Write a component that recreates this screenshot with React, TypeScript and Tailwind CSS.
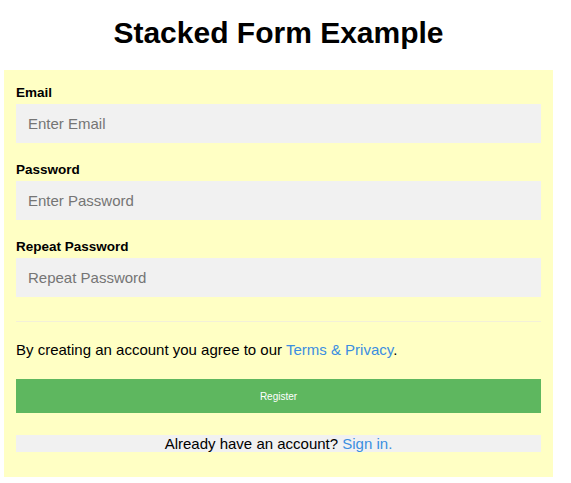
import React from "react";

function Field({ label, placeholder, type }: { label: string; placeholder: string; type: string }) {
  return (
    <div className="flex flex-col">
      <label className="block h-[16px] text-[13.5px] leading-[16px] font-bold text-black mb-[3px]">{label}</label>
      <input
        type={type}
        placeholder={placeholder}
        className="block w-full h-[39px] px-[12px] bg-[#f1f1f1] border-0 outline-none text-[15px] text-black placeholder:text-[#757575] mb-[19px]"
        style={{ fontFamily: '"Liberation Sans", Arial, sans-serif' }}
      />
    </div>
  );
}

export default function App() {
  return (
    <div
      className="bg-white min-h-[483px] w-[571px]"
      style={{ fontFamily: '"Liberation Sans", Arial, sans-serif' }}
    >
      <div className="ml-[4px] w-[549px] pt-[16px]">
        <h1 className="text-center text-[30px] leading-[34px] font-bold text-black h-[54px]">
          Stacked Form Example
        </h1>
        <form className="bg-[#ffffc4] px-[12px] pt-[15px] pb-[25px]" onSubmit={(e) => e.preventDefault()}>
          <Field label="Email" placeholder="Enter Email" type="text" />
          <Field label="Password" placeholder="Enter Password" type="password" />
          <Field label="Repeat Password" placeholder="Repeat Password" type="password" />
          <hr className="border-0 border-t border-[#f3f0d8] mt-[5px] mb-[19px]" />
          <p className="text-[15px] leading-[17px] text-black">
            By creating an account you agree to our <a href="#" className="text-[#3b8ee0]">Terms &amp; Privacy</a>.
          </p>
          <button
            type="submit"
            className="block w-full h-[34px] mt-[21px] bg-[#5eb75f] text-white text-[10px] border-0"
            style={{ fontFamily: '"Liberation Sans", Arial, sans-serif' }}
          >
            Register
          </button>
          <div className="mt-[22px] h-[17px] bg-[#f1f1f1] text-center text-[15px] leading-[17px] text-black">
            Already have an account? <a href="#" className="text-[#3b8ee0]">Sign in.</a>
          </div>
        </form>
      </div>
    </div>
  );
}
